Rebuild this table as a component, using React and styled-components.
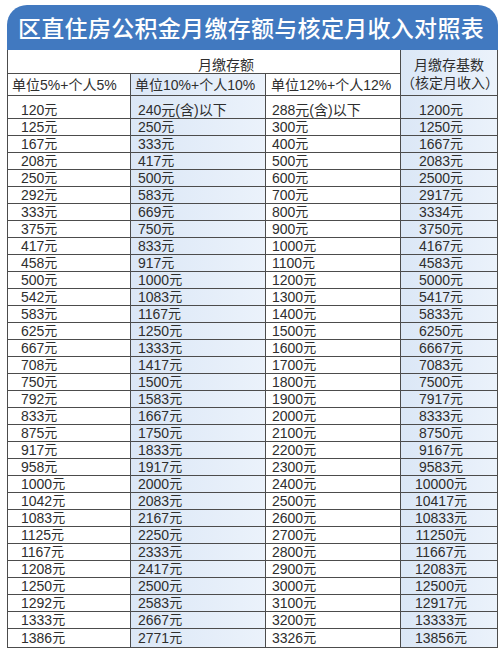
import styled, { createGlobalStyle } from 'styled-components';


const BORDER = '#4c4c4c';
const BLUE = '#4179c0';
const TINT = 'linear-gradient(to right, #dbe7f6, #ebf2fb)';

const col1 = [120, 125, 167, 208, 250, 292, 333, 375, 417, 458, 500, 542, 583, 625, 667, 708,
    750, 792, 833, 875, 917, 958, 1000, 1042, 1083, 1125, 1167, 1208, 1250, 1292, 1333, 1386];
const col2 = ['240元(含)以下', 250, 333, 417, 500, 583, 669, 750, 833, 917, 1000, 1083, 1167, 1250,
    1333, 1417, 1500, 1583, 1667, 1750, 1833, 1917, 2000, 2083, 2167, 2250, 2333, 2417, 2500,
    2583, 2667, 2771];
const col3 = ['288元(含)以下'];
for (let v = 300; v <= 3200; v += 100) col3.push(v);
col3.push(3326);
const col4 = [1200, 1250, 1667, 2083, 2500, 2917, 3334, 3750, 4167, 4583, 5000, 5417, 5833, 6250,
    6667, 7083, 7500, 7917, 8333, 8750, 9167, 9583, 10000, 10417, 10833, 11250, 11667, 12083,
    12500, 12917, 13333, 13856];

const rows = col1.map((v, i) => [v, col2[i], col3[i], col4[i]]);


const Global = createGlobalStyle`
    html, body {
        margin: 0;
        background: #fff;
    }
    * { box-sizing: border-box; }
`;
const Page = styled.div`
    width: 502px;
    padding: 5px 4px 0 7px;
    font-family: "Liberation Sans", "Noto Sans CJK SC", sans-serif;
    color: #2e2e2e;
`;
const TitleBar = styled.div`
    height: 45px;
    background: ${BLUE};
    border-radius: 20px 20px 0 0;
    padding-left: 11px;
    color: #fff;
    font-family: "Noto Sans CJK SC", sans-serif;
    font-size: 23px;
    line-height: 45px;
    font-weight: 500;
    letter-spacing: 0.3px;
    white-space: nowrap;
`;
const Table = styled.div`
    width: 491px;
    border-left: 1px solid ${BORDER};
    border-right: 1px solid ${BORDER};
    border-bottom: 1px solid ${BORDER};
`;
const Head = styled.div`
    display: grid;
    grid-template-columns: 123px 135px 135px 96px;
    grid-template-rows: 23px 22px;
    font-size: 14px;
    line-height: 16px;
`;
const Span = styled.div`
    grid-column: 1 / 4;
    padding: 7px 0 0 190px;
    border-right: 1px solid ${BORDER};
`;
const SideHead = styled.div`
    grid-column: 4;
    grid-row: 1 / 3;
    background: ${TINT};
    text-align: center;
    line-height: 18px;
    padding-top: 6px;
    white-space: nowrap;
`;
const HeadCell = styled.div`
    border-top: 1px solid ${BORDER};
    border-right: 1px solid ${BORDER};
    background: ${p => p.$tint ? TINT : 'transparent'};
    padding: 3px 0 0 ${p => p.$pad}px;
    white-space: nowrap;
`;
const Row = styled.div`
    display: grid;
    grid-template-columns: 123px 135px 135px 96px;
    height: ${p => p.$h}px;
    border-top: 1px solid ${BORDER};
    font-size: 14px;
`;
const Cell = styled.div`
    text-align: ${p => p.$center ? 'center' : 'left'};
    padding: ${p => p.$top}px ${p => p.$right || 0}px 0 ${p => p.$pad || 0}px;
    background: ${p => p.$tint ? TINT : 'transparent'};
    border-right: ${p => p.$last ? 'none' : `1px solid ${BORDER}`};
    white-space: nowrap;
    line-height: 16px;
`;
const Unit = styled.span`
    font-size: 13px;
    vertical-align: 1px;
`;


function fmt(v) {
    if (typeof v !== 'number') return v;
    return <>{v}<Unit>元</Unit></>;
}

export default function App() {
    return (
        <Page>
            <Global />
            <TitleBar>区直住房公积金月缴存额与核定月收入对照表</TitleBar>
            <Table>
                <Head>
                    <Span>月缴存额</Span>
                    <SideHead>
                        月缴存基数<br />（核定月收入）
                    </SideHead>
                    <HeadCell $pad={4}>单位5%+个人5%</HeadCell>
                    <HeadCell $pad={4} $tint>单位10%+个人10%</HeadCell>
                    <HeadCell $pad={5}>单位12%+个人12%</HeadCell>
                </Head>
                {rows.map((r, i) => {
                    const first = i === 0;
                    const h = first ? 23 : i === rows.length - 1 ? 19 : 17;
                    const top = first ? 6 : i === rows.length - 1 ? 1 : 0;
                    return (
                        <Row key={r[0]} $h={h}>
                            <Cell $pad={13} $top={top}>{fmt(r[0])}</Cell>
                            <Cell $pad={7} $top={top} $tint>{fmt(r[1])}</Cell>
                            <Cell $pad={6} $top={top}>{fmt(r[2])}</Cell>
                            <Cell $center $right={16} $top={top} $tint $last>{fmt(r[3])}</Cell>
                        </Row>
                    );
                })}
            </Table>
        </Page>
    );
}
